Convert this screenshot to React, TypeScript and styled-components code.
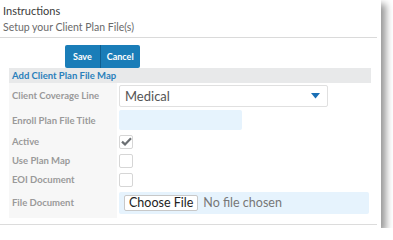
import React from 'react';
import styled, { createGlobalStyle } from 'styled-components';

const Global = createGlobalStyle`
  html, body {
    margin: 0;
    padding: 0;
    background: #ffffff;
  }
  body {
    font-family: Lato, "Open Sans", Arial, sans-serif;
  }
`;

const Card = styled.div`
  width: 381px;
  height: 228px;
  background: #ffffff;
  box-shadow: 5px 4px 7px rgba(0, 0, 0, 0.4);
  box-sizing: border-box;
  display: flex;
  flex-direction: column;
`;

const Header = styled.header`
  padding: 4px 0 0 3px;
  height: 38px;
  box-sizing: border-box;
  border-bottom: 1px solid #dadada;
  margin-right: 4px;

  h1 {
    margin: 0;
    font-size: 11px;
    font-weight: 400;
    color: #3a3a3a;
    line-height: 14px;
  }

  p {
    margin: 2px 0 0;
    font-size: 10.5px;
    color: #6a6a6a;
    line-height: 14px;
  }
`;

const Toolbar = styled.div`
  display: flex;
  padding: 7px 0 0 65px;
  height: 30px;
  box-sizing: border-box;
`;

const Button = styled.button<{ $first?: boolean }>`
  height: 23px;
  padding: 0 ${p => (p.$first ? 8 : 6)}px;
  background: #1a7db8;
  color: #ffffff;
  border: none;
  border-left: ${p => (p.$first ? 'none' : '1px solid #0f5e8f')};
  border-radius: ${p => (p.$first ? '2px 0 0 2px' : '0 2px 2px 0')};
  font-family: inherit;
  font-size: 9px;
  font-weight: 700;
`;

const Panel = styled.section`
  margin: 0 10px 0 9px;
`;

const PanelTitle = styled.h2`
  margin: 0;
  height: 15px;
  background: #e8e9ea;
  padding-left: 3px;
  font-size: 9.5px;
  font-weight: 700;
  color: #2a7fbb;
  line-height: 15px;
`;

const Rows = styled.div`
  display: grid;
  grid-template-columns: 108px 1fr;
  column-gap: 2px;
  padding-bottom: 2px;
  background: linear-gradient(to right, #f7f7f7 108px, #ffffff 108px);
`;

const Label = styled.div<{ $h: number }>`
  height: ${p => p.$h}px;
  display: flex;
  align-items: center;
  padding-left: 3px;
  font-size: 9.5px;
  font-weight: 700;
  color: #9a9a9a;
`;

const Cell = styled.div<{ $h: number }>`
  height: ${p => p.$h}px;
  display: flex;
  align-items: center;
`;

const Select = styled.div`
  width: 209px;
  height: 22px;
  box-sizing: border-box;
  border: 1px solid #e0e0e0;
  border-radius: 2px;
  display: flex;
  align-items: center;
  justify-content: space-between;
  padding: 0 7px 0 5px;
  font-size: 13px;
  color: #555555;
`;

const TextInput = styled.div`
  width: 123px;
  height: 20px;
  background: #e6f3fd;
  border-radius: 2px;
`;

const Check = styled.div`
  width: 14px;
  height: 14px;
  box-sizing: border-box;
  border: 1px solid #d6d6d6;
  border-radius: 2px;
  background: #ffffff;
  display: flex;
  align-items: center;
  justify-content: center;
`;

const FileBox = styled.div`
  width: 250px;
  height: 22px;
  background: #e6f3fd;
  border-radius: 2px;
  display: flex;
  align-items: center;
  padding-left: 5px;
  box-sizing: border-box;
  gap: 5px;
  font-size: 12.5px;
  color: #777777;
`;

const FileButton = styled.span`
  height: 16px;
  box-sizing: border-box;
  border: 1px solid #c8c8c8;
  border-radius: 2px;
  background: #ffffff;
  padding: 0 4px;
  display: flex;
  align-items: center;
  color: #222222;
`;

const Footer = styled.div`
  margin: 6px 4px 0 0;
  border-top: 1px solid #dcdcdc;
`;

export default function App() {
  return (
    <>
      <Global />
      <Card>
        <Header>
          <h1>Instructions</h1>
          <p>Setup your Client Plan File(s)</p>
        </Header>
        <Toolbar>
          <Button $first>Save</Button>
          <Button>Cancel</Button>
        </Toolbar>
        <Panel>
          <PanelTitle>Add Client Plan File Map</PanelTitle>
          <Rows>
            <Label $h={25}>Client Coverage Line</Label>
            <Cell $h={25}>
              <Select>
                <span>Medical</span>
                <svg width="9" height="6" viewBox="0 0 9 6">
                  <path d="M0 0 H9 L4.5 5.5 Z" fill="#1a6fb5" />
                </svg>
              </Select>
            </Cell>
            <Label $h={24}>Enroll Plan File Title</Label>
            <Cell $h={24}>
              <TextInput />
            </Cell>
            <Label $h={19}>Active</Label>
            <Cell $h={19}>
              <Check>
                <svg width="11" height="9" viewBox="0 0 11 9">
                  <path d="M1 4.6 L4 7.4 L10 1.2" fill="none" stroke="#6b6f73" strokeWidth="2.2" />
                </svg>
              </Check>
            </Cell>
            <Label $h={19}>Use Plan Map</Label>
            <Cell $h={19}>
              <Check />
            </Cell>
            <Label $h={19}>EOI Document</Label>
            <Cell $h={19}>
              <Check />
            </Cell>
            <Label $h={27}>File Document</Label>
            <Cell $h={27}>
              <FileBox>
                <FileButton>Choose File</FileButton>
                <span>No file chosen</span>
              </FileBox>
            </Cell>
          </Rows>
        </Panel>
        <Footer />
      </Card>
    </>
  );
}
